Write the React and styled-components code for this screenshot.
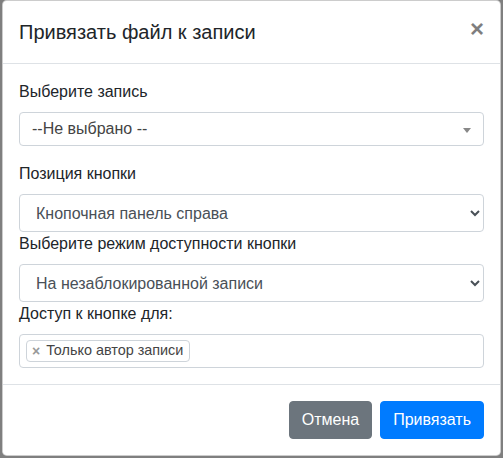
import React from 'react';
import styled, { createGlobalStyle } from 'styled-components';

const GlobalStyle = createGlobalStyle`
  html, body {
    margin: 0;
    padding: 0;
    background: #7f7f7f;
  }
  body {
    font-family: "Liberation Sans", Arial, sans-serif;
    font-size: 16px;
    line-height: 1.5;
    color: #212529;
  }
  * {
    box-sizing: border-box;
  }
`;

const Backdrop = styled.div`
  height: 458px;
  overflow: hidden;
  padding: 0 0 0 2px;
`;

const ModalContent = styled.div`
  width: 499px;
  background: #fff;
  border: 1px solid rgba(0, 0, 0, 0.2);
  border-radius: 4.8px;
  display: flex;
  flex-direction: column;
`;

const ModalHeader = styled.div`
  display: flex;
  align-items: flex-start;
  justify-content: space-between;
  padding: 16px;
  border-bottom: 1px solid #dee2e6;
`;

const ModalTitle = styled.h5`
  margin: 0;
  font-size: 20px;
  font-weight: 500;
  line-height: 1.5;
`;

const CloseButton = styled.button`
  margin: -16px -16px -16px auto;
  padding: 16px;
  background: transparent;
  border: 0;
  font-family: inherit;
  font-size: 24px;
  font-weight: 700;
  line-height: 1;
  color: #000;
  opacity: 0.5;
  text-shadow: 0 1px 0 #fff;
`;

const ModalBody = styled.div`
  padding: 16px;
`;

const FormGroup = styled.div`
  margin-bottom: ${props => (props.spaced ? '16px' : '0')};
`;

const Label = styled.label`
  display: block;
  margin-bottom: 8px;
`;

const Select2Box = styled.div`
  position: relative;
  display: flex;
  align-items: center;
  height: 34px;
  padding: 0 12px;
  border: 1px solid #ced4da;
  border-radius: 4px;
  color: #444;
`;

const Select2Arrow = styled.span`
  position: absolute;
  right: 12px;
  top: 15px;
  width: 0;
  height: 0;
  border-style: solid;
  border-width: 5px 4px 0 4px;
  border-color: #888 transparent transparent transparent;
`;

const NativeSelect = styled.select`
  display: block;
  width: 100%;
  height: 38px;
  padding: 6px 12px;
  font-family: inherit;
  font-size: 16px;
  line-height: 1.5;
  color: #495057;
  background: #fff;
  border: 1px solid #ced4da;
  border-radius: 4px;
`;

const MultiBox = styled.div`
  display: flex;
  flex-wrap: wrap;
  align-items: flex-start;
  height: 34px;
  padding: 5px 6px;
  border: 1px solid #ced4da;
  border-radius: 4px;
`;

const Chip = styled.span`
  display: inline-flex;
  align-items: center;
  height: 22px;
  padding: 0 6px 0 5px;
  border: 1px solid #ced4da;
  border-radius: 4px;
  background: #fff;
  color: #444;
  font-size: 14.4px;
`;

const ChipRemove = styled.span`
  color: #999;
  font-weight: 700;
  font-size: 14px;
  margin-right: 6px;
`;

const ModalFooter = styled.div`
  display: flex;
  justify-content: flex-end;
  align-items: center;
  padding: 12px;
  border-top: 1px solid #dee2e6;
`;

const Button = styled.button`
  margin: 4px;
  height: 38px;
  padding: 6px 12px;
  font-family: inherit;
  font-size: 16px;
  line-height: 1.5;
  color: #fff;
  background: ${props => (props.primary ? '#007bff' : '#6c757d')};
  border: 1px solid ${props => (props.primary ? '#007bff' : '#6c757d')};
  border-radius: 4px;
`;

const App = () => (
  <>
    <GlobalStyle />
    <Backdrop>
      <ModalContent>
        <ModalHeader>
          <ModalTitle>Привязать файл к записи</ModalTitle>
          <CloseButton type="button">×</CloseButton>
        </ModalHeader>
        <ModalBody>
          <FormGroup spaced>
            <Label>Выберите запись</Label>
            <Select2Box>
              --Не выбрано --
              <Select2Arrow />
            </Select2Box>
          </FormGroup>
          <FormGroup>
            <Label>Позиция кнопки</Label>
            <NativeSelect defaultValue="right">
              <option value="right">Кнопочная панель справа</option>
            </NativeSelect>
          </FormGroup>
          <FormGroup>
            <Label>Выберите режим доступности кнопки</Label>
            <NativeSelect defaultValue="unlocked">
              <option value="unlocked">На незаблокированной записи</option>
            </NativeSelect>
          </FormGroup>
          <FormGroup>
            <Label>Доступ к кнопке для:</Label>
            <MultiBox>
              <Chip>
                <ChipRemove>×</ChipRemove>
                Только автор записи
              </Chip>
            </MultiBox>
          </FormGroup>
        </ModalBody>
        <ModalFooter>
          <Button type="button">Отмена</Button>
          <Button type="button" primary>Привязать</Button>
        </ModalFooter>
      </ModalContent>
    </Backdrop>
  </>
);

export default App;
